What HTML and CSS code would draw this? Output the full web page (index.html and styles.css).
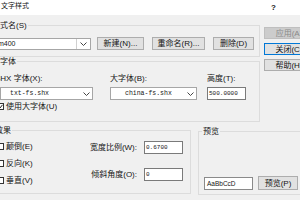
FILE: index.html
```html
<!DOCTYPE html>
<html lang="zh-CN">
<head>
<meta charset="utf-8">
<title>文字样式</title>
<link rel="stylesheet" href="styles.css">
</head>
<body>
<div class="dialog">
  <div class="titlebar"><span class="title">文字样式</span><span class="help">?</span></div>
  <div class="upper">
    <div class="leftcol">
      <div class="group g-style">
        <div class="legend lg-style">样式名(S)</div>
        <div class="style-row">
          <div class="combo combo-style">
            <span class="combo-text">m400</span>
            <span class="combo-btn"><svg width="7" height="4" viewBox="0 0 7 4"><polyline points="0.5,0.5 3.5,3.5 6.5,0.5" fill="none" stroke="#444" stroke-width="1"/></svg></span>
          </div>
          <div class="btn b-new">新建(N)...</div>
          <div class="btn b-rename">重命名(R)...</div>
          <div class="btn b-del">删除(D)</div>
        </div>
      </div>
      <div class="group g-font">
        <div class="legend lg-font">字体</div>
        <div class="font-row">
          <div class="fcol c1">
            <div class="flabel shx">SHX 字体(X):</div>
            <div class="combo combo-list">
              <span class="combo-text pad-shx">txt-fs.shx</span>
              <span class="chev"><svg width="7" height="4" viewBox="0 0 7 4"><polyline points="0.5,0.5 3.5,3.5 6.5,0.5" fill="none" stroke="#444" stroke-width="1"/></svg></span>
            </div>
          </div>
          <div class="fcol c2">
            <div class="flabel">大字体(B):</div>
            <div class="combo combo-list">
              <span class="combo-text pad-big">china-fs.shx</span>
              <span class="chev"><svg width="7" height="4" viewBox="0 0 7 4"><polyline points="0.5,0.5 3.5,3.5 6.5,0.5" fill="none" stroke="#444" stroke-width="1"/></svg></span>
            </div>
          </div>
          <div class="fcol c3">
            <div class="flabel">高度(T):</div>
            <div class="input">500.0000</div>
          </div>
        </div>
        <div class="check-row">
          <span class="cb"><svg width="5" height="5" viewBox="0 0 5 5"><polyline points="0.5,2.5 2,4 4.5,0.8" fill="none" stroke="#222" stroke-width="1"/></svg></span>
          <span>使用大字体(U)</span>
        </div>
      </div>
    </div>
    <div class="side">
      <div class="btn sbtn disabled">应用(A)</div>
      <div class="btn sbtn focused">关闭(C)</div>
      <div class="btn sbtn">帮助(H)</div>
    </div>
  </div>
  <div class="lower">
    <div class="group g-effect">
      <div class="legend lg-effect">效果</div>
      <div class="effect-body">
        <div class="checks">
          <div class="check-item"><span class="cb"></span><span>颠倒(E)</span></div>
          <div class="check-item"><span class="cb"></span><span>反向(K)</span></div>
          <div class="check-item"><span class="cb"></span><span>垂直(V)</span></div>
        </div>
        <div class="ratios">
          <span class="rlabel">宽度比例(W):</span>
          <div class="input">0.6700</div>
          <span class="rlabel">倾斜角度(O):</span>
          <div class="input">0</div>
        </div>
      </div>
    </div>
    <div class="group g-preview">
      <div class="legend lg-preview">预览</div>
      <div class="preview-body">
        <div class="preview-box">AaBbCcD</div>
        <div class="btn b-preview">预览(P)</div>
      </div>
    </div>
  </div>
</div>
</body>
</html>
```
FILE: styles.css
```css
html, body {
  margin: 0;
  padding: 0;
}
body {
  width: 300px;
  height: 200px;
  overflow: hidden;
  background: #f0f0f0;
  font-family: "Liberation Sans", "Noto Sans CJK SC", sans-serif;
  font-size: 8px;
  line-height: 9px;
  color: #151515;
}
.dialog {
  margin-left: -14px;
  width: 330px;
}
.titlebar {
  height: 15px;
  background: #fff;
  display: flex;
  justify-content: space-between;
  box-sizing: border-box;
  padding: 0 40px 0 15px;
}
.title {
  font-size: 7px;
  line-height: 12px;
}
.help {
  font-size: 8px;
  line-height: 15px;
  font-weight: bold;
}
.upper {
  display: flex;
}
.leftcol {
  width: 274px;
}
.side {
  margin-left: 4px;
  padding-top: 12px;
  display: flex;
  flex-direction: column;
  gap: 4px;
}
.group {
  border: 1px solid #dcdcdc;
  box-sizing: border-box;
}
.legend {
  width: max-content;
  background: #f0f0f0;
  padding: 0 1px;
  margin-top: -5px;
  height: 9px;
  line-height: 9px;
}
.g-style {
  margin-top: 10px;
  height: 32px;
}
.lg-style { margin-left: 4px; }
.style-row {
  display: flex;
  align-items: center;
  margin-top: 7px;
  padding-left: 13px;
}
.combo {
  height: 12px;
  box-sizing: border-box;
  border: 1px solid #a6a6a6;
  background: #fff;
  display: flex;
  align-items: center;
}
.combo-text {
  flex: 1;
  white-space: nowrap;
  overflow: hidden;
  font-family: "Liberation Mono", monospace;
  font-size: 6.5px;
  line-height: 10px;
}
.combo-style {
  margin-left: -6px;
  width: 97px;
}
.combo-style .combo-text {
  padding-left: 3px;
  font-family: "Liberation Sans", sans-serif;
  font-size: 7px;
}
.combo-btn {
  width: 13px;
  height: 10px;
  border-left: 1px solid #d0d0d0;
  display: flex;
  align-items: center;
  justify-content: center;
}
.chev {
  width: 12px;
  display: flex;
  justify-content: center;
}
.btn {
  height: 13px;
  box-sizing: border-box;
  border: 1px solid #adadad;
  background: #e1e1e1;
  display: flex;
  align-items: center;
  justify-content: center;
  white-space: nowrap;
}
.b-new { width: 47px; margin-left: 6px; }
.b-rename { width: 53px; margin-left: 8px; }
.b-del { width: 41px; margin-left: 8px; }
.sbtn {
  width: 50px;
  height: 12px;
}
.disabled {
  background: #cccccc;
  border-color: #bfbfbf;
  color: #8a8a8a;
}
.focused {
  border-color: #0078d7;
}
.g-font {
  margin-top: 4px;
  height: 61px;
}
.lg-font { margin-left: 12px; }
.font-row {
  display: flex;
  margin-top: 8px;
  padding-left: 13px;
}
.fcol {
  display: flex;
  flex-direction: column;
  gap: 4px;
}
.c1 { width: 93px; }
.c2 { width: 87px; margin-left: 17px; }
.c3 { width: 39px; margin-left: 10px; }
.flabel {
  height: 9px;
  white-space: nowrap;
}
.shx { margin-left: -5px; }
.combo-list { height: 13px; }
.pad-shx { padding-left: 9px; }
.pad-big { padding-left: 14px; }
.input {
  height: 13px;
  box-sizing: border-box;
  border: 1px solid #7a7a7a;
  background: #fff;
  padding-left: 1px;
  font-family: "Liberation Mono", monospace;
  font-size: 6px;
  line-height: 11px;
}
.check-row {
  display: flex;
  align-items: center;
  gap: 2px;
  margin-top: 2px;
  padding-left: 10px;
  height: 9px;
}
.cb {
  width: 7px;
  height: 7px;
  box-sizing: border-box;
  border: 1px solid #333;
  background: #fff;
  display: flex;
  align-items: center;
  justify-content: center;
}
.lower {
  display: flex;
  margin-top: 8px;
}
.g-effect {
  width: 205px;
  height: 64px;
}
.lg-effect { margin-left: 7px; }
.effect-body {
  display: flex;
  padding: 0 7px 0 10px;
}
.checks {
  display: flex;
  flex-direction: column;
  gap: 8px;
  margin-top: 7px;
}
.check-item {
  display: flex;
  align-items: center;
  gap: 2px;
  height: 9px;
}
.ratios {
  margin-left: auto;
  margin-top: 2px;
  display: grid;
  grid-template-columns: auto 39px;
  column-gap: 7px;
  row-gap: 5px;
  align-items: center;
}
.rlabel {
  justify-self: end;
  white-space: nowrap;
}
.g-preview {
  flex: 1;
  margin-left: 7px;
  margin-top: 1px;
  height: 64px;
  display: flex;
  flex-direction: column;
}
.lg-preview { margin-left: 3px; }
.preview-body {
  margin-top: auto;
  display: flex;
  align-items: flex-end;
  padding: 0 0 4px 5px;
}
.preview-box {
  width: 49px;
  height: 13px;
  box-sizing: border-box;
  border: 1px solid #8a8a8a;
  background: #fff;
  padding-left: 2px;
  font-size: 6.5px;
  line-height: 11px;
}
.b-preview {
  width: 40px;
  height: 14px;
  margin-left: 5px;
}
```
